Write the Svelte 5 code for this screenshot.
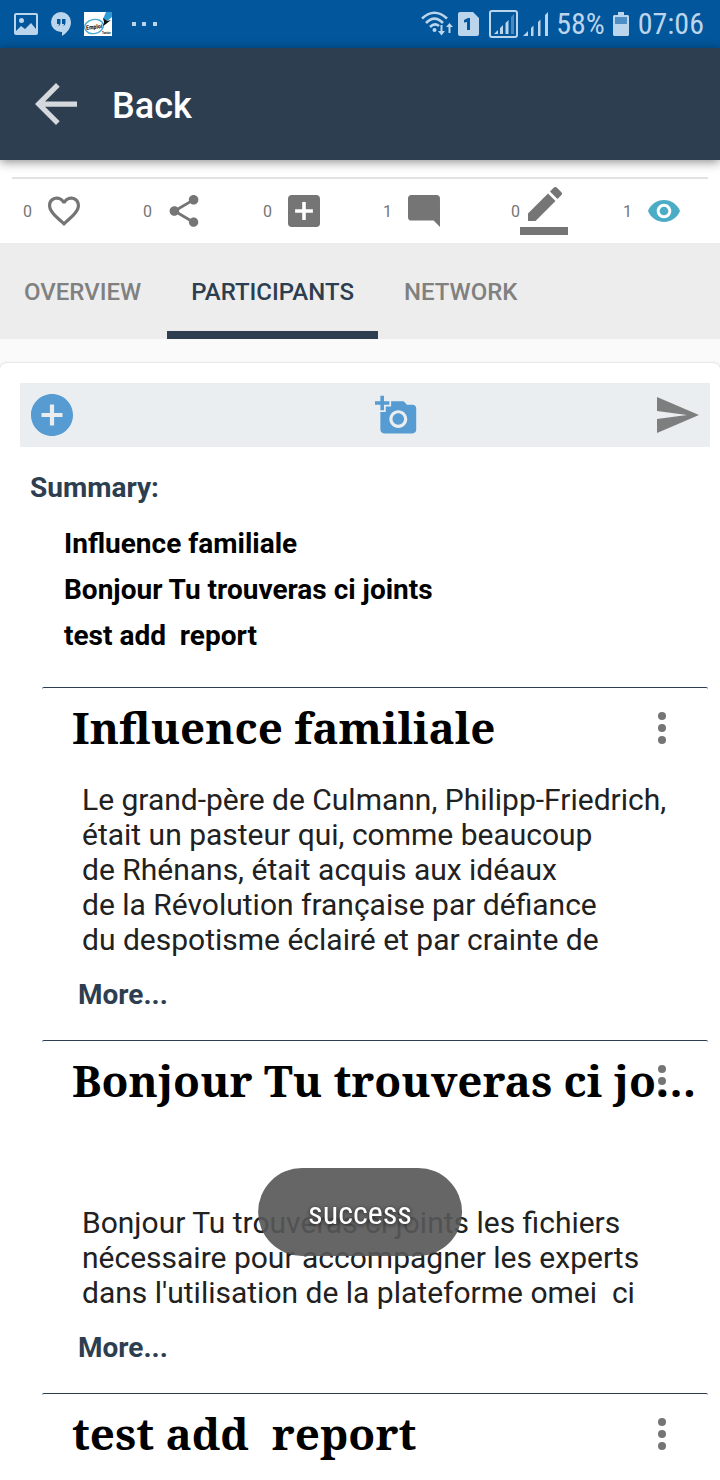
<script>
  const counters = [
    { name: 'Like', icon: 'heart', count: 0 },
    { name: 'Share', icon: 'share', count: 0 },
    { name: 'Add', icon: 'plus', count: 0 },
    { name: 'Comment', icon: 'comment', count: 1 },
    { name: 'Edit', icon: 'edit', count: 0 },
    { name: 'Views', icon: 'eye', count: 1 }
  ];

  const icons = {
    heart: { box: '2 2 20 20', d: 'M16.5 3c-1.74 0-3.41.81-4.5 2.09C10.91 3.81 9.24 3 7.5 3 4.42 3 2 5.42 2 8.5c0 3.78 3.4 6.86 8.55 11.54L12 21.35l1.45-1.32C18.6 15.36 22 12.28 22 8.5 22 5.42 19.58 3 16.5 3zm-4.4 15.55l-.1.1-.1-.1C7.14 14.24 4 11.39 4 8.5 4 6.5 5.5 5 7.5 5c1.54 0 3.04.99 3.57 2.36h1.87C13.46 5.99 14.96 5 16.5 5c2 0 3.5 1.5 3.5 3.5 0 2.89-3.14 5.74-7.9 10.05z' },
    share: { box: '2 2 20 20', d: 'M18 16.08c-.76 0-1.44.3-1.96.77L8.91 12.7c.05-.23.09-.46.09-.7s-.04-.47-.09-.7l7.05-4.11c.54.5 1.25.81 2.04.81 1.66 0 3-1.34 3-3s-1.34-3-3-3-3 1.34-3 3c0 .24.04.47.09.7L8.04 9.81C7.5 9.31 6.79 9 6 9c-1.66 0-3 1.34-3 3s1.34 3 3 3c.79 0 1.5-.31 2.04-.81l7.12 4.16c-.05.21-.08.43-.08.65 0 1.61 1.31 2.92 2.92 2.92s2.92-1.31 2.92-2.92-1.31-2.92-2.92-2.92z' },
    plus: { box: '3 3 18 18', d: 'M19 3H5c-1.11 0-2 .9-2 2v14c0 1.1.89 2 2 2h14c1.1 0 2-.9 2-2V5c0-1.1-.9-2-2-2zm-2 10h-4v4h-2v-4H7v-2h4V7h2v4h4v2z' },
    comment: { box: '2 2 20 20', d: 'M21.99 4c0-1.1-.89-2-1.99-2H4c-1.1 0-2 .9-2 2v12c0 1.1.9 2 2 2h14l4 4-.01-18z' },
    edit: { box: '0 0 24 24', d: 'M17.75 7L14 3.25l-10 10V17h3.75l10-10zm2.96-2.96c.39-.39.39-1.02 0-1.41L18.37.29c-.39-.39-1.02-.39-1.41 0L15 2.25 18.75 6l1.96-1.96zM0 20h24v4H0z' },
    eye: { box: '1 1 22 22', d: 'M12 4.5C7 4.5 2.73 7.61 1 12c1.73 4.39 6 7.5 11 7.5s9.27-3.11 11-7.5c-1.73-4.39-6-7.5-11-7.5zM12 17c-2.76 0-5-2.24-5-5s2.24-5 5-5 5 2.24 5 5-2.24 5-5 5zm0-8c-1.66 0-3 1.34-3 3s1.34 3 3 3 3-1.34 3-3-1.34-3-3-3z' }
  };

  const tabs = ['OVERVIEW', 'PARTICIPANTS', 'NETWORK'];
  let active = $state('PARTICIPANTS');

  const reports = [
    {
      title: 'Influence familiale',
      body: 'Le grand-père de Culmann, Philipp-Friedrich,\nétait un pasteur qui, comme beaucoup\nde Rhénans, était acquis aux idéaux\nde la Révolution française par défiance\ndu despotisme éclairé et par crainte de'
    },
    {
      title: 'Bonjour Tu trouveras ci joints',
      body: "\n\nBonjour Tu trouveras ci joints les fichiers\nnécessaire pour accompagner les experts\ndans l'utilisation de la plateforme omei  ci"
    },
    { title: 'test add  report', body: '\n\n\n\n' }
  ];
</script>

<div class="screen">
  <div class="status">
    <div class="group">
      <svg width="24" height="22" viewBox="0 0 24 22"><path fill-rule="evenodd" d="M2 0h20a2 2 0 0 1 2 2v18a2 2 0 0 1-2 2H2a2 2 0 0 1-2-2V2a2 2 0 0 1 2-2zm0 2v16l5-5 4 3 6-6 5 6V2zm5.500 3a2.500 2.500 0 1 1 0 5 2.500 2.500 0 0 1 0-5z" /></svg>
      <svg width="20" height="24" viewBox="0 0 20 24"><path fill-rule="evenodd" d="M10 0a10 10 0 0 1 10 10c0 6-4 11-9 14v-4h-1a10 10 0 0 1 0-20zM6 7v5h2c0 1-.5 2-1.500 2.500C9 14 9.500 12 9.500 10V7zm5 0v5h2c0 1-.5 2-1.500 2.500C14 14 14.500 12 14.500 10V7z" /></svg>
      <svg width="28" height="24" viewBox="0 0 28 24">
        <path fill="#fff" d="M0 0h28v24H0z" />
        <ellipse cx="10" cy="14.500" rx="9.500" ry="7" fill="none" stroke="#45a9dc" stroke-width="1.400" transform="rotate(-12 10 14.500)" />
        <path fill="#2f9bd6" d="M22 0h6v5l-6 5-3-3z" />
        <path fill="#111" d="M19 6l4 3 4-1-5 4-3 2 1-4z" />
        <text x="2" y="17" font-size="6" font-weight="700" fill="#111" transform="rotate(-6 10 15)">Emploi</text>
        <text x="18" y="22" font-size="3" font-weight="700" fill="#111">Tunisie</text>
      </svg>
      <svg class="dots" width="26" height="4" viewBox="0 0 26 4"><path d="M0 0h4v4H0zM10 0h4v4h-4zM21 0h4v4h-4z" /></svg>
    </div>
    <div class="group right">
      <svg width="32" height="26" viewBox="0 0 32 26">
        <g fill="none" stroke="#bbd5ec" stroke-width="2.600"><path d="M1 7.500Q13.500-4 26 7.500M5 12Q13.500 3.500 22 12M9 16Q13.500 11.500 18 15" /></g>
        <circle cx="13.500" cy="19" r="2" />
        <path d="M19.500 14h2v6h2.500l-3.500 4.500-3.500-4.500h2.500zM27.500 22h2v-6h2.500l-3.500-4-3.500 4h2.500z" />
      </svg>
      <svg width="21" height="24" viewBox="0 0 21 24"><path fill-rule="evenodd" d="M2 0h13l6 6v16a2 2 0 0 1-2 2H2a2 2 0 0 1-2-2V2a2 2 0 0 1 2-2zm4 8v2.500l3-.5v8h3V6h-2z" /></svg>
      <svg class="boxed" width="29" height="28" viewBox="0 0 29 28"><rect x="1" y="1" width="27" height="26" rx="2" fill="none" stroke="#bbd5ec" stroke-width="2" /><path d="M5 24l4-4v4zM11 18l3-3v9h-3zM16.500 13l3-3v14h-3z" /><path opacity=".4" d="M22 7l3-3v20h-3z" /></svg>
      <svg width="25" height="24" viewBox="0 0 25 24"><path d="M0 24l5-5v5zM8 16l2.500-2.500V24H8zM15 10l2.500-2.500V24H15zM22 3l3-3v24h-3z" /></svg>
      <span>58%</span>
      <svg width="16" height="24" viewBox="0 0 16 24"><path d="M5 0h6v3h4l1 1v19l-1 1H1l-1-1V4l1-1h4z" /><path fill="#4e8ec4" d="M2 5h12v7H2z" /></svg>
      <span>07:06</span>
    </div>
  </div>

  <header>
    <button class="back" aria-label="Navigate up">
      <svg width="42" height="42" viewBox="4 4 16 16"><path d="M20 11H7.830l5.590-5.590L12 4l-8 8 8 8 1.410-1.410L7.830 13H20v-2z" /></svg>
    </button>
    <h1>Back</h1>
  </header>

  <div class="counters">
    {#each counters as c}
      <button class="counter {c.icon}" aria-label={c.name}>
        <span>{c.count}</span>
        <i><svg viewBox={icons[c.icon].box}><path d={icons[c.icon].d} /></svg></i>
      </button>
    {/each}
  </div>

  <nav>
    {#each tabs as tab}
      <button class:active={tab === active} onclick={() => (active = tab)}>{tab}</button>
    {/each}
  </nav>

  <main>
    <div class="tools">
      <button aria-label="Add report"><svg width="42" height="42" viewBox="2 2 20 20"><path d="M12 2C6.480 2 2 6.480 2 12s4.480 10 10 10 10-4.480 10-10S17.520 2 12 2zm5 11h-4v4h-2v-4H7v-2h4V7h2v4h4v2z" /></svg></button>
      <button class="photo" aria-label="Add photo"><svg width="43" height="43" viewBox="0 0 24 24"><path d="M3 4V1h2v3h3v2H5v3H3V6H0V4h3zm3 6V7h3V4h7l1.830 2H21c1.100 0 2 .9 2 2v12c0 1.100-.9 2-2 2H5c-1.100 0-2-.9-2-2V10h3zm7 9c2.760 0 5-2.240 5-5s-2.240-5-5-5-5 2.240-5 5 2.240 5 5 5zm-3.200-5c0 1.770 1.430 3.200 3.200 3.200s3.200-1.430 3.200-3.200-1.430-3.200-3.200-3.200-3.200 1.430-3.200 3.200z" /></svg></button>
      <button class="send" aria-label="Send"><svg width="48" height="48" viewBox="0 0 24 24"><path d="M2.010 21L23 12 2.010 3 2 10l15 2-15 2z" /></svg></button>
    </div>

    <h2>Summary:</h2>
    <ul>
      {#each reports as r}<li>{r.title}</li>{/each}
    </ul>

    {#each reports as r}
      <article>
        <button class="menu" aria-label="Options"><svg width="8" height="32" viewBox="0 0 8 32"><circle cx="4" cy="4" r="4" /><circle cx="4" cy="16" r="4" /><circle cx="4" cy="28" r="4" /></svg></button>
        <h3>{r.title}</h3>
        <p>{r.body}</p>
        <button class="more">More...</button>
      </article>
    {/each}
  </main>

  <div class="toast" role="status">success</div>
</div>

<style>
  :global(body) {
    background: #fafafa;
  }
  .screen {
    height: 100vh;
    overflow: hidden;
    font-family: Roboto, sans-serif;
    color: #212121;
  }
  button {
    border: 0;
    padding: 0;
    background: none;
    font: inherit;
    color: inherit;
  }
  svg {
    display: block;
    fill: currentColor;
  }
  h1, h2, h3, ul, p {
    margin: 0;
    padding: 0;
  }
  .status {
    display: flex;
    justify-content: space-between;
    height: 48px;
    padding: 0 16px 0 14px;
    background: #02569b;
    color: #bbd5ec;
    font: 30px/48px "Roboto Condensed", "Liberation Sans Narrow", Roboto, sans-serif;
  }
  .group {
    display: flex;
    align-items: center;
    gap: 13px;
  }
  .dots {
    margin-left: 7px;
  }
  .right {
    gap: 5px;
  }
  .right span {
    margin: 0 3px;
  }
  .right span:last-child {
    margin: 0 0 0 4px;
  }
  .boxed {
    margin-left: 5px;
  }
  header {
    position: relative;
    display: flex;
    align-items: center;
    gap: 35px;
    height: 112px;
    padding: 0 35px;
    background: #2c3e50;
    box-shadow: 0 2px 10px rgba(0, 0, 0, 0.45);
  }
  .back {
    color: #d5d8dc;
  }
  h1 {
    padding-top: 4px;
    font-size: 36px;
    line-height: 48px;
    font-weight: 500;
    color: #fff;
  }
  .counters {
    display: grid;
    grid-template-columns: repeat(6, 1fr);
    padding-top: 19px;
    height: 64px;
    background: linear-gradient(#e2e2e2, #e2e2e2) center 17px / calc(100% - 24px) 2px no-repeat #fff;
  }
  .counter {
    display: grid;
    grid-template-columns: 40px 48px;
    align-items: center;
    justify-content: start;
    color: #757575;
  }
  .counter span {
    padding: 2px 0 0 23px;
    text-align: left;
    font-size: 16px;
    line-height: 20px;
  }
  .counter.edit span {
    padding-left: 31px;
  }
  i {
    display: grid;
    place-items: center;
  }
  i svg {
    width: 32px;
    height: 32px;
  }
  .edit i svg {
    width: 48px;
    height: 48px;
  }
  .eye svg {
    color: #4bacc6;
  }
  nav {
    display: flex;
    gap: 2px;
    height: 96px;
    background: #ededed;
  }
  nav button {
    padding: 10px 24px 0;
    border-bottom: 8px solid transparent;
    font-size: 24px;
    font-weight: 500;
    color: #808080;
  }
  nav .active {
    color: #2c3e50;
    border-color: #2c3e50;
  }
  main {
    margin-top: 24px;
    padding: 20px 10px 0 20px;
    background: #fff;
    border-radius: 6px;
    box-shadow: 0 0 2px rgba(0, 0, 0, 0.25);
  }
  .tools {
    display: flex;
    align-items: center;
    justify-content: space-between;
    height: 64px;
    padding: 0 9px 0 11px;
    background: #eaeef1;
    color: #569bd2;
  }
  .photo {
    margin-left: 67px;
  }
  .send {
    color: #7d7f7e;
  }
  h2 {
    padding: 21px 10px 13px;
    font-size: 28px;
    line-height: 40px;
    font-weight: 700;
    color: #2c3e50;
  }
  ul {
    padding: 0 44px 28px;
    list-style: none;
  }
  li {
    font-size: 28px;
    line-height: 46px;
    font-weight: 700;
    color: #000;
    white-space: pre;
  }
  article {
    position: relative;
    margin: 0 2px 0 22px;
    padding: 0 8px 25px 30px;
    border-top: 1px solid #2c3e50;
    border-radius: 2px;
  }
  h3 {
    position: relative;
    overflow: hidden;
    text-overflow: ellipsis;
    white-space: pre;
    pointer-events: none;
    font: 700 44px/78px "Noto Serif", "Droid Serif", "Noto Sans", serif;
    color: #000;
  }
  .menu {
    position: absolute;
    top: 24px;
    right: 42px;
    color: #757575;
  }
  p {
    padding: 16px 10px 0;
    font-size: 30px;
    line-height: 35px;
    white-space: pre-wrap;
  }
  .more {
    display: block;
    margin: 18px 6px 0;
    font-size: 28px;
    line-height: 40px;
    font-weight: 700;
    color: #2c3e50;
  }
  .toast {
    position: fixed;
    left: 50%;
    bottom: 224px;
    transform: translateX(-50%);
    padding: 2px 50px 0;
    border-radius: 44px;
    background: rgba(87, 87, 87, 0.91);
    color: #fff;
    font: 32px/86px "Roboto Condensed", "Liberation Sans Narrow", Roboto, sans-serif;
    text-shadow: 0 1px 4px rgba(0, 0, 0, 0.7);
  }
</style>
